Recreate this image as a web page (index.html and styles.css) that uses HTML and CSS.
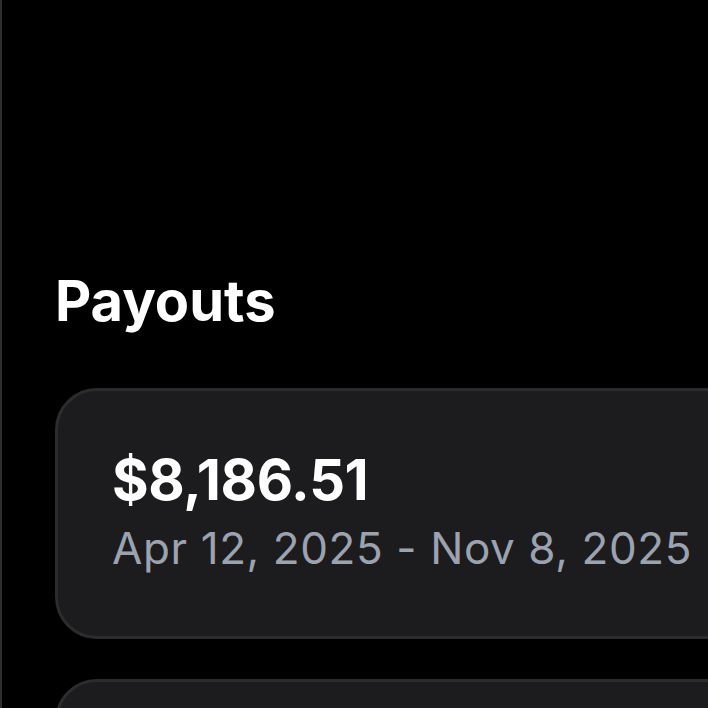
FILE: index.html
```html
<!DOCTYPE html>
<html lang="en">
<head>
<meta charset="utf-8">
<title>Payouts</title>
<link rel="stylesheet" href="styles.css">
</head>
<body>
<main class="page">
  <h1 class="title">Payouts</h1>
  <section class="list">
    <article class="card">
      <div class="amount">$8,186.51</div>
      <div class="range">Apr 12, 2025 - Nov 8, 2025</div>
    </article>
    <article class="card"></article>
  </section>
</main>
</body>
</html>
```

FILE: styles.css
```css
html, body {
  margin: 0;
  padding: 0;
  background: #000;
  overflow: hidden;
}
body {
  font-family: Inter, "Liberation Sans", sans-serif;
  color: #fff;
}
.page {
  height: 708px;
  overflow: hidden;
  border-left: 2px solid #2e2e31;
  padding: 268px 0 0 53px;
  box-sizing: border-box;
}
.title {
  margin: 0;
  font-size: 56px;
  font-weight: 700;
  line-height: 67px;
  letter-spacing: 0;
}
.list {
  margin-top: 53px;
  display: flex;
  flex-direction: column;
  gap: 40px;
}
.card {
  width: 900px;
  flex: none;
  background: #1c1c1e;
  border: 3px solid #2c2c2e;
  border-radius: 42px;
  padding: 56px 0 0 54px;
  height: 251px;
  box-sizing: border-box;
}
.amount {
  font-size: 56px;
  font-weight: 700;
  line-height: 67px;
  letter-spacing: -0.3px;
}
.range {
  margin-top: 8px;
  font-size: 44px;
  line-height: 53px;
  color: #9ca3af;
  letter-spacing: 0.6px;
}
```
